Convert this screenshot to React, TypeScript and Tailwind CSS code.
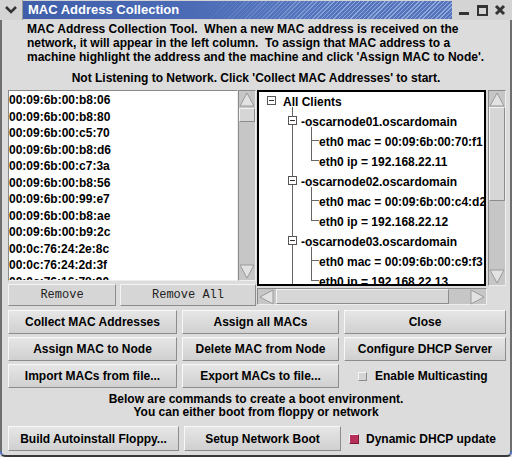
import React from "react";

const macs = [
  "00:09:6b:00:b8:06",
  "00:09:6b:00:b8:80",
  "00:09:6b:00:c5:70",
  "00:09:6b:00:b8:d6",
  "00:09:6b:00:c7:3a",
  "00:09:6b:00:b8:56",
  "00:09:6b:00:99:e7",
  "00:09:6b:00:b8:ae",
  "00:09:6b:00:b9:2c",
  "00:0c:76:24:2e:8c",
  "00:0c:76:24:2d:3f",
  "00:0c:76:16:78:90",
];

const nodes = [
  { name: "oscarnode01.oscardomain", mac: "00:09:6b:00:70:f1", ip: "192.168.22.11" },
  { name: "oscarnode02.oscardomain", mac: "00:09:6b:00:c4:d2", ip: "192.168.22.12" },
  { name: "oscarnode03.oscardomain", mac: "00:09:6b:00:c9:f3", ip: "192.168.22.13" },
];

const Btn = ({ label, className }: { label: string; className?: string }) => (
  <button
    className={
      "flex items-center justify-center bg-gradient-to-b from-[#e6e6e6] to-[#d0d0d0] border border-t-[#f8f8f8] border-l-[#f8f8f8] border-r-[#8c8c8c] border-b-[#8c8c8c] text-[12px] font-bold text-black " +
      (className ?? "")
    }
  >
    {label}
  </button>
);

const Arrow = ({ dir }: { dir: "up" | "down" | "left" | "right" }) => {
  const pts = {
    up: "8,2 15,15 1,15",
    down: "1,1 15,1 8,14",
    left: "2,8 15,1 15,15",
    right: "1,1 14,8 1,15",
  }[dir];
  return (
    <svg width="16" height="16" viewBox="0 0 16 16" className="shrink-0">
      <polygon points={pts} fill="#e2e2e2" stroke="#9a9a9a" strokeWidth="1" />
    </svg>
  );
};

const Thumb = ({ className }: { className: string }) => (
  <div
    className={
      "bg-[#d6d6d6] border border-t-[#f4f4f4] border-l-[#f4f4f4] border-r-[#8c8c8c] border-b-[#8c8c8c] " +
      className
    }
  />
);

const Minus = ({ className }: { className?: string }) => (
  <span
    className={
      "absolute w-[9px] h-[9px] border border-[#555] bg-white flex items-center justify-center " + (className ?? "")
    }
  >
    <span className="w-[5px] h-px bg-[#333]" />
  </span>
);

const Tree = () => (
  <div className="relative w-full h-full overflow-hidden whitespace-nowrap text-[12px] font-bold text-black">
    <div className="relative h-[18px]">
      <Minus className="left-[8px] top-[4px]" />
      <span className="absolute left-[24px] top-[1px]">All Clients</span>
      <span className="absolute left-[33px] top-[15px] bottom-0 w-px bg-[#666]" />
    </div>
    {nodes.map((n) => (
      <div key={n.name}>
        <div className="relative h-[20px]">
          <span className="absolute left-[33px] top-0 bottom-0 w-px bg-[#666]" />
          <Minus className="left-[29px] top-[6px]" />
          <span className="absolute left-[42px] top-[3px]">-{n.name}</span>
          <span className="absolute left-[52px] top-[17px] bottom-0 w-px bg-[#666]" />
        </div>
        <div className="relative h-[20px]">
          <span className="absolute left-[33px] top-0 bottom-0 w-px bg-[#666]" />
          <span className="absolute left-[52px] top-0 bottom-0 w-px bg-[#666]" />
          <span className="absolute left-[52px] top-[10px] w-[8px] h-px bg-[#666]" />
          <span className="absolute left-[60px] top-[3px]">eth0 mac = {n.mac}</span>
        </div>
        <div className="relative h-[20px]">
          <span className="absolute left-[33px] top-0 bottom-0 w-px bg-[#666]" />
          <span className="absolute left-[52px] top-0 h-[11px] w-px bg-[#666]" />
          <span className="absolute left-[52px] top-[10px] w-[8px] h-px bg-[#666]" />
          <span className="absolute left-[60px] top-[3px]">eth0 ip = {n.ip}</span>
        </div>
      </div>
    ))}
  </div>
);

export default function App() {
  return (
    <div className="w-[512px] h-[457px] flex flex-col bg-[#dcdcdc] font-['Liberation_Sans',Arial,sans-serif] text-black overflow-hidden">
      {/* title bar */}
      <div className="h-[20px] flex shrink-0 bg-[#d4d4d4]">
        <div className="w-[23px] flex items-center justify-center border-r border-[#9a9a9a]">
          <svg width="12" height="8" viewBox="0 0 12 8">
            <polyline points="1,1 6,6 11,1" fill="none" stroke="#333" strokeWidth="2.5" />
          </svg>
        </div>
        <div className="w-[429px] my-px flex items-center bg-gradient-to-r from-[#3f5fab] to-[#5e7ec6]">
          <span className="pl-[5px] pr-3 text-white text-[13px] font-bold">MAC Address Collection</span>
          <div className="flex-1 h-full bg-[repeating-linear-gradient(135deg,#5574bc_0px,#5574bc_2px,#8ea8dc_2px,#8ea8dc_3px)] [mask-image:linear-gradient(to_right,transparent,black_60%)]" />
        </div>
        <div className="flex-1 flex items-center justify-end gap-[2px] pr-[4px]">
          <div className="w-[16px] h-[16px] flex items-end justify-center pb-[3px]">
            <span className="w-[10px] h-[3px] bg-[#333]" />
          </div>
          <div className="w-[16px] h-[16px] flex items-center justify-center">
            <span className="w-[11px] h-[11px] border-2 border-t-[3px] border-[#333]" />
          </div>
          <div className="w-[16px] h-[16px] flex items-center justify-center">
            <svg width="12" height="12" viewBox="0 0 12 12">
              <path d="M2 2 L10 10 M10 2 L2 10" stroke="#333" strokeWidth="3" />
            </svg>
          </div>
        </div>
      </div>

      <div className="flex-1 flex flex-col border-x-2 border-[#6e6e6e] px-[6px]">
        {/* intro text */}
        <div className="mt-[2px] pl-[19px] text-[12px] font-bold leading-[14px] whitespace-nowrap">
          <div>MAC Address Collection Tool.&nbsp; When a new MAC address is received on the</div>
          <div>network, it will appear in the left column.&nbsp; To assign that MAC address to a</div>
          <div>machine highlight the address and the machine and click 'Assign MAC to Node'.</div>
        </div>
        <div className="mt-[7px] text-center text-[12px] font-bold leading-[14px]">
          Not Listening to Network. Click 'Collect MAC Addresses' to start.
        </div>

        {/* panels */}
        <div className="mt-[5px] flex gap-[1px]">
          <div className="w-[248px] flex flex-col">
            <div className="h-[191px] flex">
              <div className="w-[230px] bg-white border border-t-[#8a8a8a] border-l-[#8a8a8a] border-r-[#eeeeee] border-b-[#eeeeee] overflow-hidden">
                <div className="pt-[1px] text-[12px] font-bold leading-[16.5px]">
                  {macs.map((m) => (
                    <div key={m}>{m}</div>
                  ))}
                </div>
              </div>
              <div className="w-[18px] flex flex-col items-center bg-[#c6c6c6] border border-t-[#8a8a8a] border-l-[#8a8a8a] border-r-[#eeeeee] border-b-[#eeeeee]">
                <Arrow dir="up" />
                <Thumb className="w-[16px] h-[14px] mt-px" />
                <div className="flex-1" />
                <Arrow dir="down" />
              </div>
            </div>
            <div className="mt-[3px] h-[22px] flex gap-[4px]">
              <button className="w-[108px] bg-[#d6d6d6] border border-t-[#f4f4f4] border-l-[#f4f4f4] border-r-[#8c8c8c] border-b-[#8c8c8c] font-['Liberation_Mono',monospace] text-[12px] text-[#222]">
                Remove
              </button>
              <button className="flex-1 bg-[#d6d6d6] border border-t-[#f4f4f4] border-l-[#f4f4f4] border-r-[#8c8c8c] border-b-[#8c8c8c] font-['Liberation_Mono',monospace] text-[12px] text-[#222]">
                Remove All
              </button>
            </div>
          </div>

          <div className="w-[249px] flex flex-col">
            <div className="h-[196px] flex gap-[2px]">
              <div className="w-[230px] bg-white border-2 border-black">
                <Tree />
              </div>
              <div className="w-[18px] flex flex-col items-center bg-[#c6c6c6] border border-t-[#8a8a8a] border-l-[#8a8a8a] border-r-[#eeeeee] border-b-[#eeeeee]">
                <Arrow dir="up" />
                <Thumb className="w-[16px] h-[94px]" />
                <div className="flex-1" />
                <Arrow dir="down" />
              </div>
            </div>
            <div className="mt-[2px] w-[230px] h-[17px] flex items-center bg-[#c6c6c6] border border-t-[#8a8a8a] border-l-[#8a8a8a] border-r-[#eeeeee] border-b-[#eeeeee]">
              <Arrow dir="left" />
              <Thumb className="h-[15px] w-[173px] ml-[2px]" />
              <div className="flex-1" />
              <Arrow dir="right" />
            </div>
          </div>
        </div>

        {/* main buttons */}
        <div className="mt-[4px] grid grid-cols-[169px_157px_162px] gap-x-[5px] gap-y-[3px] [&>*]:h-[24px]">
          <Btn label="Collect MAC Addresses" />
          <Btn label="Assign all MACs" />
          <Btn label="Close" />
          <Btn label="Assign MAC to Node" />
          <Btn label="Delete MAC from Node" />
          <Btn label="Configure DHCP Server" />
          <Btn label="Import MACs from file..." />
          <Btn label="Export MACs to file..." />
          <div className="flex items-center pl-[14px] gap-[8px] text-[12px] font-bold">
            <span className="w-[9px] h-[9px] bg-[#d4d4d4] border border-t-[#f4f4f4] border-l-[#f4f4f4] border-r-[#8c8c8c] border-b-[#8c8c8c]" />
            Enable Multicasting
          </div>
        </div>

        <div className="mt-[5px] text-center text-[12px] font-bold leading-[13px]">
          <div>Below are commands to create a boot environment.</div>
          <div>You can either boot from floppy or network</div>
        </div>

        <div className="mt-[7px] flex h-[25px]">
          <Btn label="Build Autoinstall Floppy..." className="w-[171px]" />
          <Btn label="Setup Network Boot" className="w-[157px] ml-[5px]" />
          <div className="flex items-center pl-[8px] gap-[7px] text-[12px] font-bold">
            <span className="w-[10px] h-[10px] bg-[#b8305a] border border-t-[#f0f0f0] border-l-[#f0f0f0] border-r-[#7a1a38] border-b-[#7a1a38]" />
            Dynamic DHCP update
          </div>
        </div>
      </div>
      <div className="h-[6px] shrink-0 bg-[#dcdcdc] border-x-2 border-b-2 border-x-[#4d6db5] border-b-[#3a3a3a] rounded-b-[5px]" />
    </div>
  );
}
